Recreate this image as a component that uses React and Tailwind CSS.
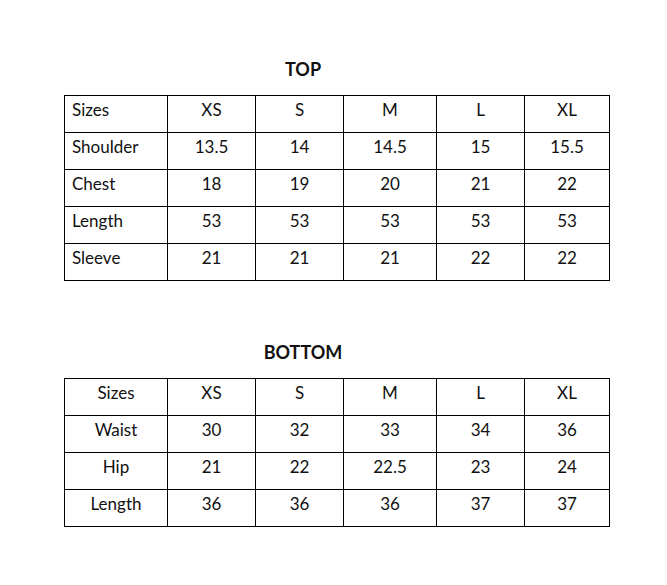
const sizes = ["XS", "S", "M", "L", "XL"];

const top = [
  ["Shoulder", "13.5", "14", "14.5", "15", "15.5"],
  ["Chest", "18", "19", "20", "21", "22"],
  ["Length", "53", "53", "53", "53", "53"],
  ["Sleeve", "21", "21", "21", "22", "22"],
];

const bottom = [
  ["Waist", "30", "32", "33", "34", "36"],
  ["Hip", "21", "22", "22.5", "23", "24"],
  ["Length", "36", "36", "36", "37", "37"],
];

function SizeTable({ rows, firstCentered }) {
  const all = [["Sizes", ...sizes], ...rows];
  return (
    <div className="ml-[64px] grid w-max grid-cols-[103px_88px_88px_93px_88px_85px] border-l border-t border-black">
      {all.map((row, r) =>
        row.map((cell, c) => (
          <div
            key={r + "-" + c}
            className={
              "h-[37px] border-b border-r border-black pt-[2px] text-[17px] leading-[24px] text-[#111] " +
              (c === 0 && !firstCentered ? "pl-[7px] text-left" : "text-center")
            }
          >
            {cell}
          </div>
        ))
      )}
    </div>
  );
}

export default function App() {
  return (
    <div className="min-h-[585px] w-[667px] bg-white pt-[55px] font-['Lato',sans-serif]">
      <div className="ml-[64px] w-[478px] text-center text-[18px] font-bold leading-[28px] text-[#111]">
        TOP
      </div>
      <div className="mt-[12px]">
        <SizeTable rows={top} />
      </div>

      <div className="ml-[64px] mt-[57px] w-[478px] text-center text-[18px] font-bold leading-[28px] text-[#111]">
        BOTTOM
      </div>
      <div className="mt-[12px]">
        <SizeTable rows={bottom} firstCentered />
      </div>
    </div>
  );
}
